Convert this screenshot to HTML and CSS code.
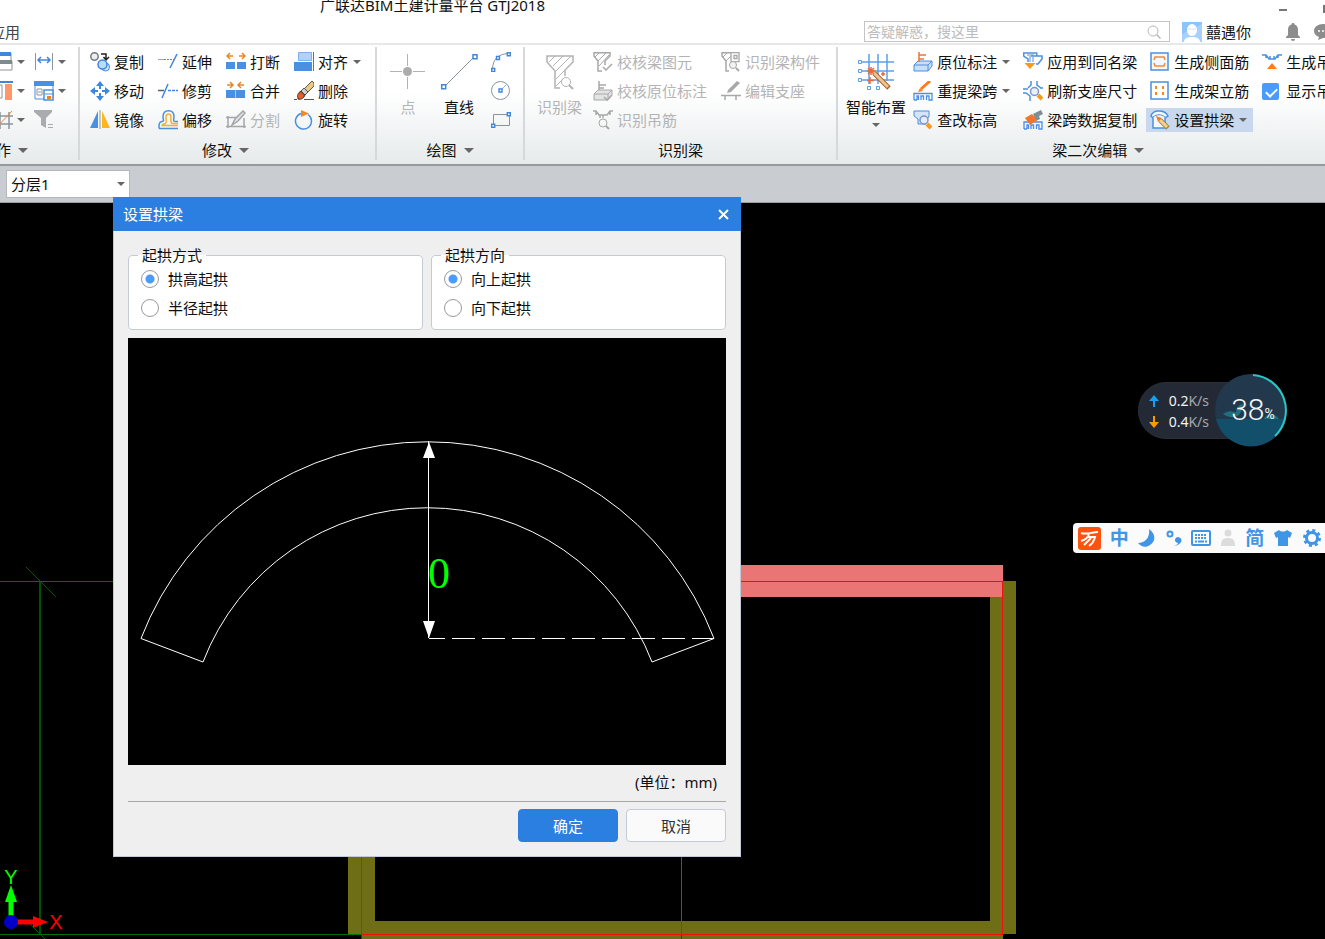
FILE: index.html
```html
<!DOCTYPE html>
<html lang="zh-CN">

<head>
    <meta charset="UTF-8">
    <meta name="viewport" content="width=device-width, initial-scale=1.0">
    <title>广联达BIM土建计量平台 GTJ2018</title>
    <link rel="stylesheet" href="styles.css">
</head>

<body>
    <header class="header">
        <div class="title-row">
            <h1 class="app-title">广联达BIM土建计量平台 GTJ2018</h1>
            <div class="window-buttons">
                <button type="button" class="icon-button" aria-label="最小化"><svg width="8" height="20"><path d="M0 12h8" stroke="#777" stroke-width="2"/></svg></button>
                <button type="button" class="icon-button" aria-label="最大化"><svg width="9" height="20"><rect x="1" y="8" width="8" height="6" fill="none" stroke="#777" stroke-width="2"/></svg></button>
            </div>
        </div>
        <div class="tab-row">
            <a href="#" class="tab">应用</a>
            <div class="account">
                <div class="search">
                    <input type="text" class="search-input" placeholder="答疑解惑，搜这里" aria-label="搜索">
                    <button type="button" class="icon-button" aria-label="搜索"><svg width="14" height="14" fill="none" stroke="#b8b8b8"><circle cx="6" cy="6" r="5"/><path d="M9.500 9.500L13.500 13.500" stroke-width="1.500"/></svg></button>
                </div>
                <svg class="avatar" width="20" height="20"><rect width="20" height="20" fill="#8cc4fa"/><path d="M0 20V12L20 2v18z" fill="#a5d1fc"/><path d="M5 8a5 6 0 0 1 10 0c0 3-2 6-5 6s-5-3-5-6zM2 20c0-4 4-5 8-5s8 1 8 5z" fill="#fff"/><path d="M6 7h8" stroke="#cfe5fb"/></svg>
                <span class="user-name">囍遇你</span>
                <button type="button" class="icon-button bell" aria-label="通知"><svg width="16" height="20" fill="#8c8c8c"><path d="M8 1c1 0 1.500.6 1.500 1.500C12 3.500 13 5 13 8v5l2 2v1H1v-1l2-2V8c0-3 1-4.500 3.500-5.500C6.500 1.600 7 1 8 1zM6 17h4a2 2 0 0 1-4 0z"/></svg></button>
                <button type="button" class="icon-button" aria-label="消息"><svg width="20" height="20"><path d="M10 2c5 0 9 3 9 7s-4 7-9 7l-5 2 1-3c-3-1-5-3-5-6 0-4 4-7 9-7z" fill="#8c8c8c"/><g fill="#fff"><circle cx="6" cy="9" r="1"/><circle cx="10" cy="9" r="1"/><circle cx="14" cy="9" r="1"/></g></svg></button>
            </div>
        </div>
    </header>

    <nav class="ribbon">
        <section class="group group-operate">
            <div class="tools">
                <div class="tool-grid">
                    <button type="button" class="tool" aria-label="窗口"><svg class="icon" viewBox="0 0 20 20"><path d="M1 1h17v8H1z" fill="#fff" stroke="#8b979c"/><path d="M1 0h17v4H1z" fill="#3f87dd"/><path d="M3 9h16v9H3z" fill="#fff" stroke="#8b979c"/><path d="M3 8h16v4H3z" fill="#7d8b91"/></svg><i class="caret"></i></button>
                    <button type="button" class="tool" aria-label="柱"><svg class="icon" viewBox="0 0 20 20"><path d="M0 1h20" stroke="#3f87dd" stroke-width="2"/><path d="M2 4h7v13H2z" fill="#fff" stroke="#8b979c"/><path d="M12 3h7v16h-7z" fill="#ff9868"/></svg><i class="caret"></i></button>
                    <button type="button" class="tool" aria-label="轴线"><svg class="icon" viewBox="0 0 20 20"><path d="M0 6h20M0 14h20M7 2v17M16 2v17" stroke="#8b979c" stroke-width="1.500"/><path d="M4 17L19 1" stroke="#f1813a"/></svg><i class="caret"></i></button>
                    <button type="button" class="tool" aria-label="长度标注"><svg class="icon" viewBox="0 0 20 20"><path d="M1.500 1v17M18.500 1v17" stroke="#8b979c"/><path d="M4 8h12M7 5L4 8l3 3M13 5l3 3-3 3" stroke="#3f87dd" stroke-width="1.500" fill="none"/></svg><i class="caret"></i></button>
                    <button type="button" class="tool" aria-label="保存视图"><svg class="icon" viewBox="0 0 20 20"><path d="M1 1h18v17H1z" fill="#fff" stroke="#4a8fe0"/><path d="M0 0h20v5H0z" fill="#4a8fe0"/><path d="M3 8h5v6H3zM4 11h3" fill="none" stroke="#8b979c"/><path d="M10 9h9v10h-9z" fill="#fff" stroke="#4a8fe0" stroke-width="1.500"/><path d="M13 15h4v3h-4z" fill="#f08020"/><path d="M11 13h8" stroke="#4a8fe0"/></svg><i class="caret"></i></button>
                    <button type="button" class="tool" aria-label="过滤"><svg class="icon" viewBox="0 0 20 20"><path d="M0 0h18v2l-6 6v10l-5-3V8L0 2z" fill="#a9acae"/><path d="M14 14.500h5M14 17.500h5" stroke="#a9acae"/></svg></button>
                </div>
            </div>
            <button type="button" class="group-label">操作<i class="caret caret-large"></i></button>
        </section>

        <section class="group group-modify">
            <div class="tools">
                <div class="tool-grid">
                    <button type="button" class="tool"><svg class="icon" viewBox="0 0 20 20" fill="none"><circle cx="4.500" cy="4.500" r="3.700" fill="#eceeef" stroke="#747a80" stroke-width="1.500"/><path d="M11 2h5v5M13.500 5L16 8l3-3" stroke="#222" stroke-width="1.500"/><circle cx="15.500" cy="15" r="4" fill="#d9e9fb" stroke="#3f87dd"/><circle cx="12.500" cy="12.500" r="4.500" fill="#b9dcf7" stroke="#3f87dd" stroke-width="1.500"/></svg>复制</button>
                    <button type="button" class="tool"><svg class="icon" viewBox="0 0 20 20" fill="#3f87dd"><path d="M10 0l4 5H6zM10 20l4-5H6zM0 10l5-4v8zM20 10l-5-4v8z"/><path d="M10 3v5M10 12v5M3 10h5M12 10h5" stroke="#3f87dd" stroke-width="2"/></svg>移动</button>
                    <button type="button" class="tool"><svg class="icon" viewBox="0 0 20 20"><path d="M8 1v17H0z" fill="#4a90e2"/><path d="M12 1v17h8z" fill="#ffb51d"/><path d="M10 0v19" stroke="#8b979c"/></svg>镜像</button>
                    <button type="button" class="tool"><svg class="icon" viewBox="0 0 20 20" fill="none"><path d="M0 7.500h6" stroke="#9aa7af"/><path d="M6 7.500h10" stroke="#4a90e2" stroke-dasharray="2 1"/><path d="M19 2L12 16" stroke="#3f87dd" stroke-width="1.500"/></svg>延伸</button>
                    <button type="button" class="tool"><svg class="icon" viewBox="0 0 20 20" fill="none"><path d="M0 9.500h6" stroke="#56626a" stroke-width="1.500"/><path d="M10 3L4 17" stroke="#3f87dd" stroke-width="1.500"/><path d="M10 9.500h10" stroke="#3f87dd" stroke-width="1.500" stroke-dasharray="3 1"/></svg>修剪</button>
                    <button type="button" class="tool"><svg class="icon" viewBox="0 0 20 20" fill="none"><path d="M1 18.500C1 14 1 12 4 11.500 6.500 11 5 9 5 7c0-4 2-6.200 5.500-6.200S16 3 16 7c0 2-1.500 4.500 1 4.500h3M1 18.500h19" stroke="#4a90e2" stroke-width="1.500"/><path d="M20 15.500H4C4 14 6 14 7.500 13.500 9 12 8 9 8 7c0-4 5-4 5 0 0 2-1 5 1 6.500h6" stroke="#f4b13a" stroke-width="1.500"/></svg>偏移</button>
                    <button type="button" class="tool"><svg class="icon" viewBox="0 0 20 20"><path d="M0 10h9v7H0zM11 10h9v7h-9z" fill="#4a90e2"/><path d="M7 4H2M4 1L1 4l3 3M13 4h5M16 1l3 3-3 3" stroke="#e8872a" stroke-width="1.500" fill="none"/></svg>打断</button>
                    <button type="button" class="tool"><svg class="icon" viewBox="0 0 20 20"><path d="M0 9h19v8H0z" fill="#4a90e2"/><path d="M9.500 9v8" stroke="#a5cbf4"/><path d="M1 4h6M4 1l3 3-3 3M18 4h-6M15 1l-3 3 3 3" stroke="#e8872a" stroke-width="1.500" fill="none"/></svg>合并</button>
                    <button type="button" class="tool" disabled><svg class="icon" viewBox="0 0 20 20" fill="none" stroke="#a3a6a8"><path d="M2 6v12M18 8v10M0 7.500h12M0 16.500h20" stroke-width="1.500"/><path d="M6 15l3-6 8-8 2 2-7 8z" fill="#dfe1e2" stroke-width="1.500"/></svg>分割</button>
                    <button type="button" class="tool"><svg class="icon" viewBox="0 0 20 20"><path d="M4.500.5h13v8h-13z" fill="#b3d1f7" stroke="#7db0ee"/><path d="M0 10h18v9H0z" fill="#4a90e2"/><path d="M19.500 0v19" stroke="#68747b"/></svg>对齐<i class="caret"></i></button>
                    <button type="button" class="tool"><svg class="icon" viewBox="0 0 20 20"><path d="M0 18.500h3M10 18.500h10" stroke="#555"/><path d="M18 0l2 2v3l-8 8-4-3z" fill="#e7c98c" stroke="#6b553a"/><path d="M10 7l4 4-3 3-4-4z" fill="#cbd0d5" stroke="#555"/><path d="M7 10l4 4c-1 3-4 5-7 4-1-4 0-6 3-8z" fill="#b4532c" stroke="#4f3526"/><circle cx="6.500" cy="15" r="2.500" fill="#e2602c"/></svg>删除</button>
                    <button type="button" class="tool"><svg class="icon" viewBox="0 0 20 20"><path d="M14 4.500A8 8 0 1 1 7 3.500" stroke="#4a90e2" stroke-width="1.500" fill="none"/><path d="M7 0l8 3.500L7 7z" fill="#f08a24"/></svg>旋转</button>
                </div>
            </div>
            <button type="button" class="group-label">修改<i class="caret caret-large"></i></button>
        </section>

        <section class="group group-draw">
            <div class="tools">
                <button type="button" class="tool-big" disabled><svg class="icon-big" viewBox="0 0 38 38"><path d="M18.500 1v12M18.500 24v12M1 18.500h12M24 18.500h12" stroke="#b3b3b3"/><circle cx="18.500" cy="18.500" r="4.500" fill="#ababab"/></svg>点</button>
                <button type="button" class="tool-big"><svg class="icon-big" viewBox="0 0 38 38"><path d="M4 34L34 4" stroke="#87949a"/><path d="M1.700 31.700h4v4h-4zM33 1.700h4v4h-4z" fill="#fff" stroke="#3f87dd" stroke-width="1.500"/></svg>直线</button>
                <div class="tool-grid">
                    <button type="button" class="tool tool-bare" aria-label="弧线"><svg class="icon" viewBox="0 0 20 20" fill="#fff"><path d="M1.500 17C2 8 6 2 18 1.500" stroke="#87949a" fill="none"/><path d="M.7 16.500h3v3h-3zM5.500 4.500h3v3h-3zM16.300.7h3v3h-3z" stroke="#3f87dd" stroke-width="1.400"/></svg></button>
                    <button type="button" class="tool tool-bare" aria-label="圆"><svg class="icon" viewBox="0 0 20 20" fill="#fff"><circle cx="9.500" cy="9.500" r="9" stroke="#87949a"/><path d="M10 9l6-6" stroke="#8bb8ef"/><path d="M8 8h3v3H8z" stroke="#3f87dd" stroke-width="1.400"/></svg></button>
                    <button type="button" class="tool tool-bare" aria-label="矩形"><svg class="icon" viewBox="0 0 20 20" fill="#fff"><path d="M2.500 4.500h16v11h-16z" stroke="#87949a" fill="none"/><path d="M.7 14.300h3v3h-3zM16.300 2.700h3v3h-3z" stroke="#3f87dd" stroke-width="1.400"/></svg></button>
                </div>
            </div>
            <button type="button" class="group-label">绘图<i class="caret caret-large"></i></button>
        </section>

        <section class="group group-identify">
            <div class="tools">
                <button type="button" class="tool-big" disabled><svg class="icon-big" viewBox="0 0 38 38" fill="none" stroke="#b3b3b3"><path d="M19 35h-5V18L6 9V3h26v6l-8 8v6" stroke-width="1.500"/><path d="M8 9l6-6M12 13L22 3M14 19L30 3M15 26l9-9M15 33l7-7"/><circle cx="25" cy="29" r="4.500"/><path d="M28 32l4 4" stroke-width="2"/></svg>识别梁</button>
                <div class="tool-grid">
                    <button type="button" class="tool" disabled><svg class="icon" viewBox="0 0 20 20" fill="none" stroke="#a8a8a8"><path d="M9 19H5V9L1 4V.7h16V4l-5 5v4" stroke-width="1.500"/><path d="M2 5l4-4M5 9l8-8M6 14L16 3"/><path d="M10 15l3 3 6-6" stroke-width="1.500"/></svg>校核梁图元</button>
                    <button type="button" class="tool" disabled><svg class="icon" viewBox="0 0 20 20" fill="none" stroke="#a8a8a8"><path d="M6 0v9M6 4h7M6 7h5" stroke-width="1.500"/><path d="M1 13l4-4h14v5l-4 5H1z" fill="#e3e3e3"/><path d="M1 13h14l4-4M15 13v6"/><path d="M11 16l3 3 5-5" stroke-width="1.500"/></svg>校核原位标注</button>
                    <button type="button" class="tool" disabled><svg class="icon" viewBox="0 0 20 20" fill="none" stroke="#a8a8a8"><path d="M0 1h3l3 4h8l3-4h3M3 1v4M7 5v3M10 5v3M17 1v4" stroke-width="1.500"/><circle cx="10" cy="13" r="4"/><path d="M13 16l3 3" stroke-width="2"/></svg>识别吊筋</button>
                    <button type="button" class="tool" disabled><svg class="icon" viewBox="0 0 20 20" fill="none" stroke="#a8a8a8"><path d="M10 .7H1V4l4 5v10h3" stroke-width="1.500"/><path d="M2 5l4-4M5 9l5-5"/><path d="M10 .7h8v9h-8zM13 3.500h3v3h-3z" stroke-width="1.300"/><circle cx="12" cy="13" r="3.500" fill="#f2f2f2"/><path d="M15 16l3 3" stroke-width="2"/></svg>识别梁构件</button>
                    <button type="button" class="tool" disabled><svg class="icon" viewBox="0 0 20 20" fill="none" stroke="#a8a8a8"><path d="M7 9L16 0l3 2-9 9-4 1z" fill="#a8a8a8" stroke="none"/><path d="M0 14.500h20M4 15v4M15 15v4" stroke-width="1.500"/></svg>编辑支座</button>
                </div>
            </div>
            <span class="group-label">识别梁</span>
        </section>

        <section class="group group-beam">
            <div class="tools">
                <button type="button" class="tool-big"><svg class="icon-big" viewBox="0 0 38 38" fill="none"><path d="M12 1v30M21 1v30M30 1v27M4 9h33M4 18h33M4 27h33" stroke="#5d9ee8" stroke-width="1.500"/><path d="M1.500 7.500h3v3h-3zM1.500 16.500h3v3h-3zM1.500 25.500h3v3h-3zM10.500 33.500h3v3h-3zM19.500 33.500h3v3h-3z" fill="#fff" stroke="#5d9ee8"/><path d="M17 20l15 15" stroke="#a5642d" stroke-width="5"/><path d="M17 20l14 14" stroke="#f1c48f" stroke-width="3"/><path d="M14 14v8M10 18h8M11 15l6 6M17 15l-6 6M13 24v7M10 27.500h7M26 19v4M24 21h4" stroke="#ef6a32" stroke-width="1.500"/></svg>智能布置<i class="caret"></i></button>
                <div class="tool-grid">
                    <button type="button" class="tool"><svg class="icon" viewBox="0 0 20 20" fill="none"><path d="M1 13l4-4h14v5l-4 5H1z" fill="#c9def7" stroke="#4a90e2"/><path d="M1 13h14l4-4M15 13v6" stroke="#4a90e2"/><path d="M6 0v10M6 3h7M6 7h5" stroke="#e8763a" stroke-width="1.500"/></svg>原位标注<i class="caret"></i></button>
                    <button type="button" class="tool"><svg class="icon" viewBox="0 0 20 20" fill="none"><path d="M1 19v-6.500h18V19h-3v-4h-2.500v4M10.500 19v-4H8v4M4 19v-4h1.500v4M1 19h3" stroke="#4a90e2" stroke-width="1.300"/><path d="M8 8L17 0" stroke="#ff7b1c" stroke-width="3"/><path d="M5 11l2-4 3 3z" fill="#ff7b1c"/></svg>重提梁跨<i class="caret"></i></button>
                    <button type="button" class="tool"><svg class="icon" viewBox="0 0 20 20" fill="none"><path d="M1 1h15v6l-3 2v5H5V9L1 6z" fill="#d5e5f9" stroke="#4a90e2"/><circle cx="11" cy="10" r="4" fill="#e5eefb" stroke="#7e93c8" stroke-width="1.500"/><path d="M14 14l4 4" stroke="#f59a1b" stroke-width="4"/></svg>查改标高</button>
                    <button type="button" class="tool"><svg class="icon" viewBox="0 0 20 20" fill="none"><path d="M5 10V7L.7 4V1h13v3M8 4h11v3l-4 5h-2" stroke="#4a90e2" stroke-width="1.500"/><path d="M4 3h7M7 4v6M10 5v5" stroke="#4a90e2"/><path d="M1.500 11h11L7 17z" fill="#f59a1b"/></svg>应用到同名梁</button>
                    <button type="button" class="tool"><svg class="icon" viewBox="0 0 20 20" fill="none"><path d="M8 0v4L5 7M14 0v4l4 3M0 8h5M0 12h3l4 3v5M20 7h-3" stroke="#4a90e2" stroke-width="1.500"/><circle cx="11.500" cy="10.500" r="4" fill="#e8f0fb" stroke="#7e93c8" stroke-width="1.500"/><path d="M15 14l4 4" stroke="#f59a1b" stroke-width="4"/></svg>刷新支座尺寸</button>
                    <button type="button" class="tool"><svg class="icon" viewBox="0 0 20 20" fill="none"><path d="M1 19v-7h18v7h-3v-4h-2.500v4M10.500 19v-4H8v4M4 19v-4h1.500v4M1 19h3" stroke="#4a90e2" stroke-width="1.300"/><path d="M10 4l8-4 2 4-4 2 1 3-4 2z" fill="#7f8d94"/><path d="M2 8l7-4 5 6-7 5z" fill="#f1762c"/></svg>梁跨数据复制</button>
                    <button type="button" class="tool"><svg class="icon" viewBox="0 0 20 20" fill="none"><path d="M1 1h17v17H1z" fill="#f4f8fd" stroke="#4a90e2" stroke-width="1.500"/><path d="M4 8l1-3h9l1 3M4 11l1 3h9l1-3" stroke="#f08a3c" stroke-width="1.500"/></svg>生成侧面筋</button>
                    <button type="button" class="tool"><svg class="icon" viewBox="0 0 20 20"><path d="M1 1h17v17H1z" fill="#fff" stroke="#4a90e2" stroke-width="1.500"/><path d="M5 5h2v3H5zM12 5h2v3h-2zM5 11h2v3H5zM12 11h2v3h-2z" fill="#f08a24"/></svg>生成架立筋</button>
                    <button type="button" class="tool tool-active"><svg class="icon" viewBox="0 0 20 20" fill="none"><path d="M1 6c1-4 4-5 8-5s7 1 9 5l-3 2v10H3V8z" fill="#f5f9fe" stroke="#4a90e2" stroke-width="1.500"/><path d="M3 7c4-3 8-3 12 0" stroke="#4a90e2"/><path d="M10 10l8 8" stroke="#a98749" stroke-width="5"/><path d="M10 10l7 7" stroke="#f3d293" stroke-width="3"/><path d="M6 6l6 2-4 4z" fill="#ee7f2c"/></svg>设置拱梁<i class="caret"></i></button>
                    <button type="button" class="tool"><svg class="icon" viewBox="0 0 20 20" fill="none"><path d="M0 3h4l3 4h6l3-4h4M4 3v3M8 7V4M12 7V4M16 3v3" stroke="#4a90e2" stroke-width="1.500"/><path d="M10 11l5 6H5z" fill="#ff7b1c"/></svg>生成吊筋</button>
                    <label class="tool"><span class="check-slot"><input type="checkbox" class="check" checked></span>显示吊筋</label>
                </div>
            </div>
            <button type="button" class="group-label">梁二次编辑<i class="caret caret-large"></i></button>
        </section>
    </nav>

    <div class="layer-bar">
        <div class="layer-select">
            <select aria-label="分层">
                <option>分层1</option>
            </select>
            <i class="caret"></i>
        </div>
    </div>

    <main class="canvas">
        <svg class="drawing" fill="none">
            <!-- walls -->
            <g fill="#6e6e17">
                <path d="M348 378h27v353h-27z"/>
                <path d="M361 718h642v30H361z"/>
                <path d="M990 378h26v353h-26z"/>
            </g>
            <!-- selected beam -->
            <path d="M361 362h642v32H361z" fill="#ea7575"/>
            <!-- axis lines -->
            <path d="M0 378.500h361M0 731.500h361" stroke="#007000"/>
            <path d="M40 378v353" stroke="#005200" stroke-width="2"/>
            <path d="M26 364l30 30M26 717l30 30M361.500 731v30M681.500 731v30" stroke="#006000"/>
            <g fill="#f01010">
                <rect x="361" y="378" width="1" height="353"/>
                <rect x="681" y="378" width="1" height="353"/>
                <rect x="1002" y="378" width="1" height="353"/>
                <rect x="361" y="378" width="642" height="1"/>
                <rect x="361" y="731" width="642" height="1"/>
            </g>
            <!-- coordinate marker -->
            <path d="M11 718v-20" stroke="#00ff00" stroke-width="5"/>
            <path d="M11 682l6 17H5z" fill="#00ff00"/>
            <path d="M16 719h18" stroke="#ff0000" stroke-width="5"/>
            <path d="M48 719l-15 6v-12z" fill="#ff0000"/>
            <circle cx="11" cy="719" r="7" fill="#0000c8"/>
            <text class="axis-name" x="11" y="681" fill="#00ff00">Y</text>
            <text class="axis-name" x="56" y="726" fill="#ff0000">X</text>
        </svg>

        <form class="dialog">
            <div class="dialog-title">
                <h2>设置拱梁</h2>
                <button type="button" class="icon-button" aria-label="关闭"><svg width="11" height="11"><path d="M1 1l9 9M10 1l-9 9" stroke="#fff" stroke-width="2"/></svg></button>
            </div>
            <div class="dialog-body">
                <div class="options">
                    <fieldset>
                        <legend>起拱方式</legend>
                        <label><input type="radio" name="method" checked>拱高起拱</label>
                        <label><input type="radio" name="method">半径起拱</label>
                    </fieldset>
                    <fieldset>
                        <legend>起拱方向</legend>
                        <label><input type="radio" name="direction" checked>向上起拱</label>
                        <label><input type="radio" name="direction">向下起拱</label>
                    </fieldset>
                </div>
                <svg class="preview" viewBox="0 0 598 427" fill="none" stroke="#fff">
                    <path d="M13 300.500A307 307 0 0 1 586 300.500L524 324A240.500 240.500 0 0 0 75 324Z" stroke="none"/>
                    <path d="M75 324L13 300.500A307 307 0 0 1 586 300.500L524 324A240.500 240.500 0 0 0 75 324"/>
                    <path d="M300.500 103v197"/>
                    <path d="M301 300.500h285" stroke-dasharray="23 7" stroke-dashoffset="7"/>
                    <path d="M301 104l6 16h-12zM301 300l6-17h-12z" fill="#fff" stroke="none"/>
                    <text class="arch-height" x="300" y="250">0</text>
                </svg>
                <p class="unit">(单位：mm)</p>
                <div class="actions">
                    <button type="submit" class="button button-primary">确定</button>
                    <button type="button" class="button">取消</button>
                </div>
            </div>
        </form>

        <div class="net-speed">
            <div class="net-rates">
                <span><svg width="10" height="12"><path d="M5 0l5 6H6v6H4V6H0z" fill="#149ff0"/></svg>0.2<small>K/s</small></span>
                <span><svg width="10" height="12"><path d="M5 12l5-6H6V0H4v6H0z" fill="#ff9800"/></svg>0.4<small>K/s</small></span>
            </div>
            <div class="net-ball">
                <svg viewBox="0 0 74 74" fill="none"><circle cx="37" cy="37" r="36" fill="#22384d"/><path d="M2 46h70A36 36 0 0 1 2 46z" fill="#124f6b"/><path d="M9 41c5-4 10-3 13-1 0-5 3-9 7-9-1 4-1 8-4 11-5 3-10 3-16-1zM50 46c1-5 12-6 15 0z" fill="#1f6f7c"/><path d="M39 2A35.500 35.500 0 0 1 61 63" stroke="#25c7c5" stroke-width="2"/></svg>
                <strong>38<small>%</small></strong>
            </div>
        </div>

        <div class="ime-bar">
            <button type="button" aria-label="输入法"><svg width="24" height="24" fill="none"><rect x="1" y="1" width="23" height="23" rx="3" fill="#fd5210"/><path d="M4 7c6 2 11-1 17-1M12 8c-1 4-4 6-8 7M11 11h7c-1 4-3 7-6 9M7 19l7-7" stroke="#fff" stroke-width="2"/></svg></button>
            <button type="button">中</button>
            <button type="button" aria-label="月亮"><svg width="18" height="18"><path d="M11 0c7 5 7 12 1 16-4 3-9 2-12-2 8 0 12-6 11-14z" fill="#3f95e6"/></svg></button>
            <button type="button" aria-label="标点"><svg width="18" height="18"><circle cx="5" cy="5" r="2.500" fill="none" stroke="#3f95e6" stroke-width="2"/><path d="M9 17c3-1 4-2 4-3-5-1-3-6 0-6 6 1 4 8-4 9z" fill="#3f95e6"/></svg></button>
            <button type="button" aria-label="键盘"><svg width="20" height="18" fill="none" stroke="#3f95e6"><rect x="1" y="2" width="18" height="14" rx="1" stroke-width="2"/><path d="M4 6h12M4 9h12" stroke-width="2" stroke-dasharray="2 1"/><path d="M4 12.500h2M7 12.500h6M14 12.500h2" stroke-width="2"/></svg></button>
            <button type="button" aria-label="用户"><svg width="16" height="18" fill="#dcdcdc"><circle cx="8" cy="4" r="3.500"/><path d="M1 17c0-6 2-8 7-8s7 2 7 8z"/></svg></button>
            <button type="button">简</button>
            <button type="button" aria-label="皮肤"><svg width="20" height="18" fill="#3f95e6"><path d="M6 1c2 2 6 2 8 0l5 3-2 5-2-1v9H5V8L3 9 1 4z"/></svg></button>
            <button type="button" aria-label="设置"><svg width="20" height="20" fill="none" stroke="#3f95e6"><circle cx="10" cy="10" r="5.500" stroke-width="3"/><circle cx="10" cy="10" r="7.500" stroke-width="3" stroke-dasharray="3 2.890"/></svg></button>
        </div>
    </main>
</body>

</html>
```
FILE: styles.css
```css
* {
    box-sizing: border-box;
}

body {
    display: flex;
    flex-direction: column;
    height: 100vh;
    margin: 0;
    overflow: hidden;
    background: #fff;
    color: #111;
    font-family: "Noto Sans", "Noto Sans CJK SC", sans-serif;
    font-size: 15px;
    line-height: 20px;
}

button,
input,
select {
    font: inherit;
    color: inherit;
}

button {
    padding: 0;
    border: none;
    background: none;
    white-space: nowrap;
    cursor: pointer;
}

svg {
    display: block;
    flex: none;
}

h1,
h2,
p {
    margin: 0;
    font-size: 15px;
    font-weight: normal;
}

/* header */
.header {
    flex: none;
    border-bottom: 2px solid #e6e8e9;
}

.title-row {
    display: flex;
    justify-content: space-between;
    height: 20px;
    padding-left: 320px;
}

.app-title {
    margin-top: -5px;
    white-space: nowrap;
}

.window-buttons {
    display: flex;
    gap: 36px;
    margin-top: -5px;
    margin-right: -7px;
}

.tab-row {
    display: flex;
    align-items: center;
    height: 23px;
}

.tab {
    margin-left: -10px;
    color: #444;
    text-decoration: none;
}

.account {
    display: flex;
    align-items: center;
    margin-left: auto;
    margin-right: -8px;
}

.search {
    display: flex;
    align-items: center;
    width: 306px;
    height: 21px;
    padding-right: 8px;
    border: 1px solid #c4c4c4;
}

.search-input {
    flex: 1;
    min-width: 0;
    height: 19px;
    padding: 0 2px;
    border: none;
    outline: none;
    background: none;
    font-size: 14px;
}

.search-input::placeholder {
    color: #bcbcbc;
}

.avatar {
    margin: 0 4px 0 12px;
}

.bell {
    margin: 0 12px 0 34px;
}

/* ribbon */
.ribbon {
    display: flex;
    flex: none;
    padding-bottom: 4px;
    background: linear-gradient(#fff 40%, #e6eaeb);
    border-bottom: 2px solid #96999d;
}

.group {
    display: flex;
    flex: none;
    flex-direction: column;
    margin-top: 2px;
    padding-top: 3px;
    border-right: 2px solid #d6d9db;
}

.group-operate {
    align-items: flex-end;
    width: 80px;
    padding-right: 8px;
}

.group-operate .group-label {
    padding-right: 42px;
}

.group-modify {
    padding-left: 6px;
    padding-right: 10px;
}

.group-draw {
    padding-left: 12px;
    padding-right: 12px;
}

.group-identify {
    padding-left: 12px;
    padding-right: 12px;
}

.group-beam {
    padding-left: 8px;
    padding-right: 8px;
    border-right: none;
}

.tools {
    display: flex;
    gap: 7px;
}

.group-draw .tools {
    gap: 13px;
}

.group-beam .tools {
    gap: 3px;
}

.tool-grid {
    display: grid;
    grid-template-rows: repeat(3, 24px);
    grid-auto-flow: column;
    gap: 5px 6px;
}

.group-operate .tool-grid {
    column-gap: 1px;
}

.group-beam .tool-grid {
    column-gap: 5px;
}

.tool {
    display: flex;
    align-items: center;
    gap: 4px;
    padding: 0 4px;
    white-space: nowrap;
}

.tool .caret {
    margin-left: 1px;
}

.group-operate .tool .caret {
    margin-left: 0;
}

.tool-bare {
    padding: 0;
}

.tool-active {
    background: #c8d8ee;
}

.icon {
    width: 20px;
    height: 20px;
}

.tool-big {
    display: flex;
    flex-direction: column;
    align-items: center;
    align-self: flex-start;
    gap: 6px;
    min-width: 38px;
    padding-top: 3px;
}

.icon-big {
    width: 38px;
    height: 38px;
}

button:disabled {
    color: #b4b4b4;
}

.caret {
    flex: none;
    border: 4px solid transparent;
    border-top-color: #666;
    border-bottom: none;
}

.caret-large {
    border-width: 5px;
    border-bottom: none;
}

.group-label {
    display: flex;
    align-items: center;
    justify-content: center;
    gap: 7px;
    margin-top: 8px;
}

.check-slot {
    display: flex;
    width: 20px;
}

.check {
    appearance: none;
    position: relative;
    width: 17px;
    height: 17px;
    margin: 0;
    border-radius: 2px;
    background: #4a9bfb;
}

.check:checked::after {
    content: "";
    position: absolute;
    left: 6px;
    top: 3px;
    width: 5px;
    height: 9px;
    border: solid #fff;
    border-width: 0 2px 2px 0;
    transform: rotate(45deg);
}

/* layer bar */
.layer-bar {
    flex: none;
    padding: 4px 6px;
    background: #c9cdd2;
    border-bottom: 1px solid #9a9da1;
}

.layer-select {
    position: relative;
    width: 124px;
}

.layer-select select {
    display: block;
    appearance: none;
    width: 100%;
    height: 28px;
    padding: 0 4px;
    border: 1px solid #b4b8bc;
    border-radius: 0;
    background: #fff;
}

.layer-select .caret {
    position: absolute;
    right: 5px;
    top: 12px;
    pointer-events: none;
}

/* canvas */
.canvas {
    position: relative;
    flex: 1;
    background: #000;
}

.drawing {
    width: 100%;
    height: 100%;
}

.axis-name {
    font-family: "Liberation Sans", sans-serif;
    font-size: 20px;
    text-anchor: middle;
}

/* dialog */
.dialog {
    position: absolute;
    left: 113px;
    top: -6px;
    width: 628px;
    background: #efefef;
    border: 1px solid #c2cad8;
    border-top: none;
}

.dialog-title {
    display: flex;
    align-items: center;
    justify-content: space-between;
    height: 34px;
    margin: 0 -1px;
    padding: 0 12px 0 10px;
    background: #2b7fe0;
    color: #fff;
}

.dialog-body {
    padding: 14px;
}

.options {
    display: flex;
    gap: 8px;
    margin-bottom: 8px;
}

fieldset {
    flex: 1;
    min-width: 0;
    margin: 0;
    padding: 4px 12px 2px;
    border: 1px solid #c5cad3;
    border-radius: 4px;
    background: #fff;
}

legend {
    margin-left: -3px;
    padding: 0 4px;
}

fieldset label {
    display: flex;
    align-items: center;
    gap: 9px;
    margin-bottom: 9px;
}

input[type="radio"] {
    appearance: none;
    width: 18px;
    height: 18px;
    margin: 0;
    border: 1px solid #999;
    border-radius: 50%;
    background: #fff;
}

input[type="radio"]:checked {
    background: radial-gradient(circle, #4a9bfb 4px, #fff 5px);
}

.preview {
    width: 100%;
    background: #000;
}

.arch-height {
    fill: #00ff00;
    stroke: none;
    font-family: "Liberation Serif", serif;
    font-size: 44px;
}

.unit {
    padding: 7px 9px 9px;
    border-bottom: 1px solid #a8a8a8;
    text-align: right;
}

.actions {
    display: flex;
    justify-content: flex-end;
    gap: 8px;
    padding-top: 7px;
}

.button {
    width: 100px;
    height: 33px;
    border: 1px solid #c3cad8;
    border-radius: 4px;
    background: #fafafa;
    color: #333;
}

.button-primary {
    border-color: #2b7fe0;
    background: #2b7fe0;
    color: #fff;
}

/* network speed widget */
.net-speed {
    position: absolute;
    right: 37px;
    top: 170px;
    display: flex;
    align-items: center;
}

.net-rates {
    display: flex;
    flex-direction: column;
    justify-content: center;
    gap: 1px;
    height: 57px;
    margin-right: -24px;
    padding: 2px 28px 0 10px;
    border: 1px solid #2c2f36;
    border-radius: 28px 0 0 28px;
    background: #242a35;
    color: #f2f2f2;
    font-size: 14px;
}

.net-rates span {
    display: flex;
    align-items: center;
}

.net-rates svg {
    margin-right: 10px;
}

.net-rates small {
    color: #a3a7ae;
    font-size: 14px;
}

.net-ball {
    position: relative;
    width: 74px;
    height: 74px;
}

.net-ball strong {
    position: absolute;
    inset: 0;
    display: flex;
    align-items: center;
    justify-content: center;
    padding-left: 4px;
    color: #f2f6f8;
    font-family: Roboto, sans-serif;
    font-size: 30px;
    font-weight: 300;
}

.net-ball small {
    margin-top: 8px;
    font-size: 14px;
    font-weight: 400;
}

/* input method bar */
.ime-bar {
    position: absolute;
    right: 0;
    top: 320px;
    display: flex;
    align-items: center;
    justify-content: space-between;
    width: 252px;
    height: 30px;
    padding: 0 3px 0 4px;
    border-radius: 4px 0 0 4px;
    background: #fbfbfb;
}

.ime-bar button {
    color: #3f95e6;
    font-size: 19px;
    font-weight: bold;
}
```
